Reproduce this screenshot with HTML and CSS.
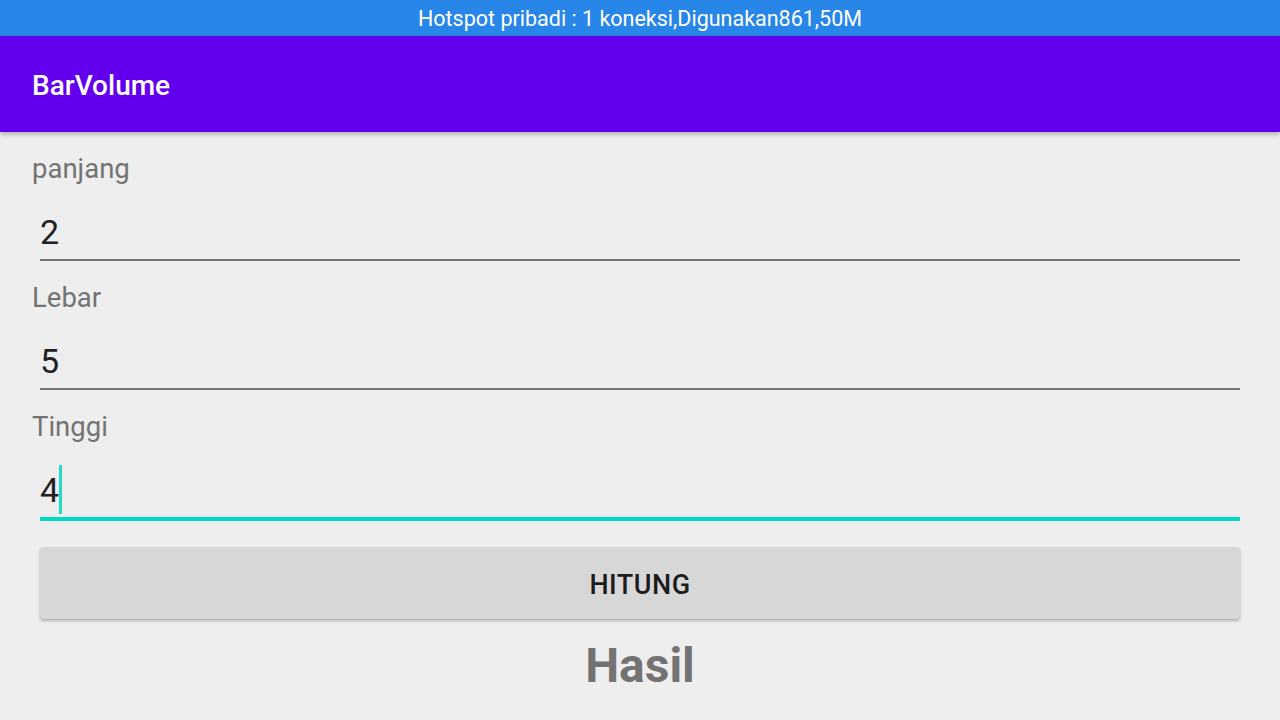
FILE: index.html
```html
<!DOCTYPE html>
<html lang="id">
<head>
<meta charset="utf-8">
<title>BarVolume</title>
<link rel="stylesheet" href="styles.css">
</head>
<body>
<div class="screen">
  <div class="statusbar">Hotspot pribadi : 1 koneksi,Digunakan861,50M</div>
  <header class="appbar"><h1 class="title">BarVolume</h1></header>
  <main class="content">
    <div class="group">
      <div class="label">panjang</div>
      <div class="field"><span class="value">2</span></div>
    </div>
    <div class="group">
      <div class="label">Lebar</div>
      <div class="field"><span class="value">5</span></div>
    </div>
    <div class="group">
      <div class="label">Tinggi</div>
      <div class="field focused"><span class="value">4</span><span class="cursor"></span></div>
    </div>
    <button class="btn">HITUNG</button>
    <div class="result">Hasil</div>
  </main>
</div>
</body>
</html>
```
FILE: styles.css
```css
* { box-sizing: border-box; }
html, body { margin: 0; padding: 0; }
body {
  width: 1280px;
  height: 720px;
  overflow: hidden;
  background: #eeeeee;
  font-family: Roboto, "Noto Sans", sans-serif;
}
.screen { display: flex; flex-direction: column; height: 720px; }
.statusbar {
  height: 36px;
  background: #2886e8;
  color: #ffffff;
  font-size: 21.5px;
  line-height: 38px;
  text-align: center;
}
.appbar {
  height: 96px;
  background: #6200ee;
  display: flex;
  align-items: center;
  padding-left: 32px;
  box-shadow: 0 2px 5px rgba(0,0,0,0.28);
  position: relative;
  z-index: 1;
}
.title {
  margin: 0;
  color: #ffffff;
  font-size: 28px;
  font-weight: 500;
  line-height: 32px;
  padding-top: 4px;
}
.content {
  padding: 22px 32px 0;
  display: flex;
  flex-direction: column;
}
.group { display: flex; flex-direction: column; margin-bottom: 20px; }
.group:nth-child(3) { margin-bottom: 26px; }
.label {
  font-size: 27.5px;
  line-height: 30px;
  color: #737373;
  margin-bottom: 28px;
}
.field {
  margin: 0 8px 2px;
  height: 49px;
  border-bottom: 2px solid #737373;
  padding-bottom: 5px;
  display: flex;
  align-items: flex-start;
  position: relative;
}
.field.focused {
  height: 51px;
  margin-bottom: 0;
  border-bottom: 4px solid #03dac5;
}
.value {
  font-size: 34px;
  line-height: 40px;
  color: #212121;
}
.cursor {
  width: 3px;
  height: 49px;
  background: #1fdcc9;
  margin-top: -5px;
}
.btn {
  margin: 0 8px;
  height: 72px;
  border: none;
  border-radius: 4px;
  background: #d6d7d6;
  box-shadow: 0 2px 3px rgba(0,0,0,0.25);
  font-family: Roboto, "Noto Sans", sans-serif;
  font-size: 27px;
  font-weight: 500;
  letter-spacing: 0.5px;
  color: #1c1c1c;
  padding: 3px 0 0;
}
.result {
  margin-top: 17px;
  text-align: center;
  font-size: 48px;
  line-height: 60px;
  font-weight: 700;
  color: #737373;
}
```
